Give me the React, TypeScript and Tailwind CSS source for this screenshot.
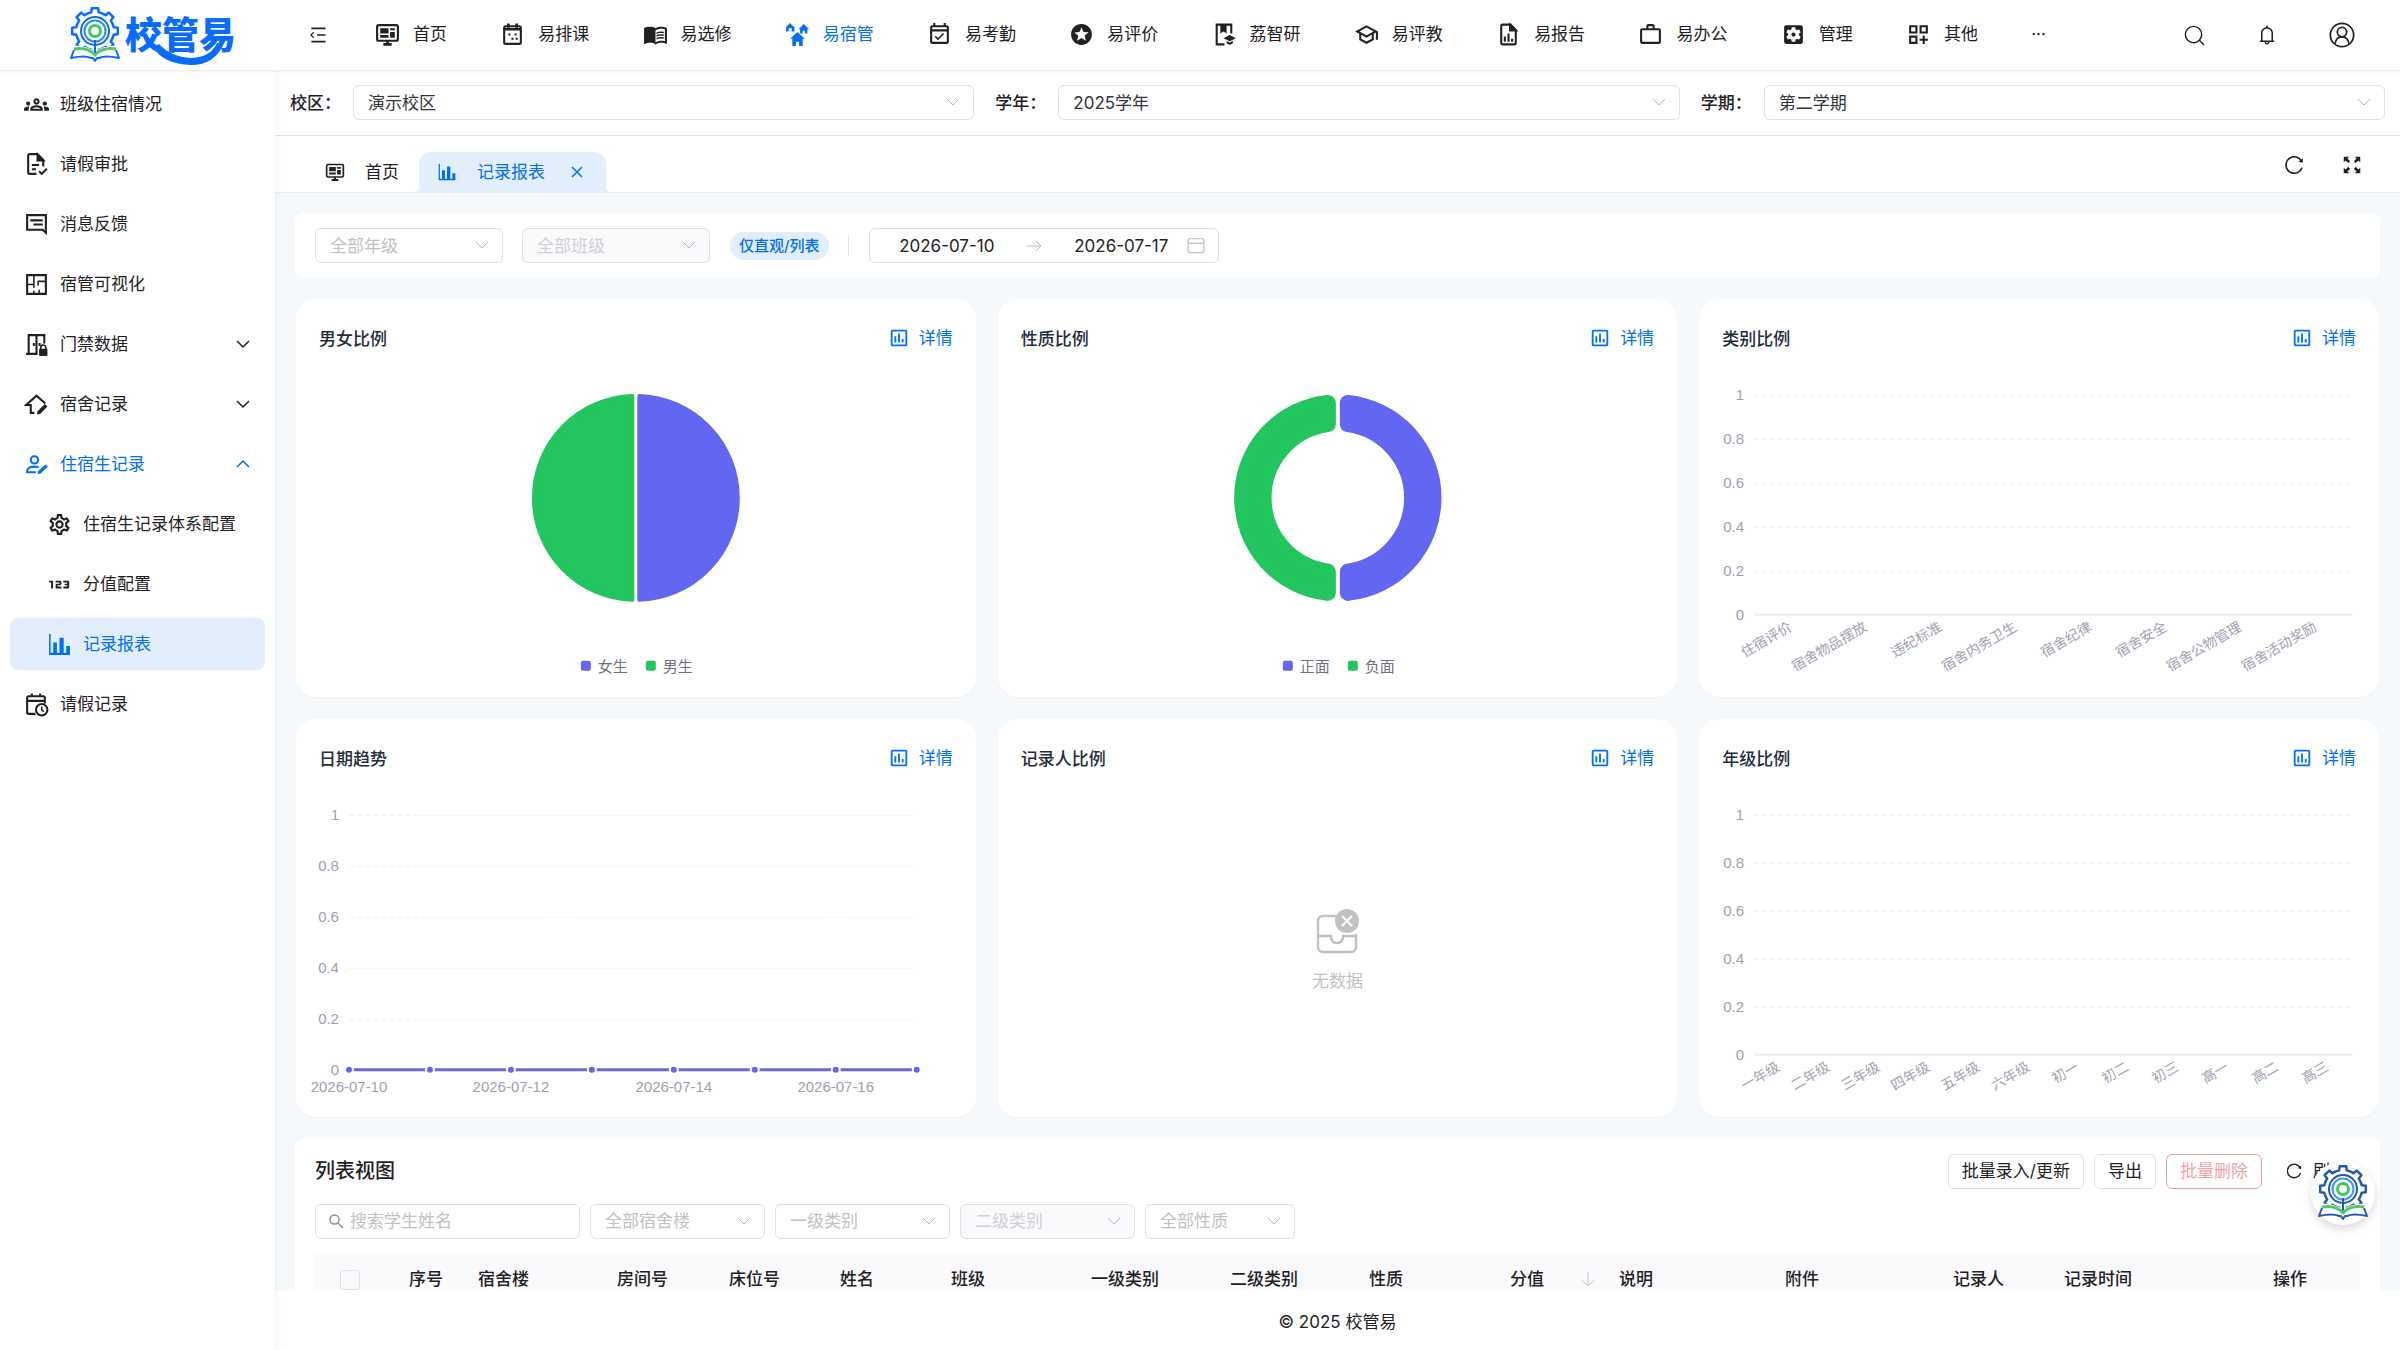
import type { ReactNode } from 'react';
import {
  MdMenuBook,
  MdOutlineEventAvailable,
  MdStars,
  MdOutlineSchool,
  MdWorkOutline,
  MdSettingsApplications,
  MdOutlineDashboardCustomize,
  MdOutlineGroups,
  MdOutlineSettings,
  Md123,
  MdOutlineInsertChart,
} from 'react-icons/md';
import { AiOutlineBell, AiOutlineReload } from 'react-icons/ai';

type IconProps = { className?: string };

function Svg({ className = 'size-6', children }: IconProps & { children: ReactNode }) {
  return (
    <svg
      viewBox="0 0 24 24"
      className={className}
      fill="none"
      stroke="currentColor"
      strokeWidth="2"
      aria-hidden="true"
    >
      {children}
    </svg>
  );
}

const MonitorIcon = (p: IconProps) => (
  <Svg {...p}>
    <rect x="2" y="3" width="20" height="15" rx="1.5" />
    <path d="M5 6h8v5H5zM14.500 6H19v2h-4.500zM14.500 9.500H19V15h-4.500zM5 12.500h8V15H5z" fill="currentColor" stroke="none" />
    <path d="M12 18v3M8 21.500h8" strokeWidth="2.500" />
  </Svg>
);

const CalendarDotsIcon = (p: IconProps) => (
  <Svg {...p}>
    <rect x="4" y="4" width="16" height="17" rx="1.500" />
    <path d="M4 7h16M8 1.500v4M16 1.500v4" strokeWidth="2.500" />
    <path d="M8 11h2v2H8zM14 11h2v2h-2zM11 15h2v2h-2zM15 15h2v2h-2z" fill="currentColor" stroke="none" />
  </Svg>
);

const VillageIcon = (p: IconProps) => (
  <Svg {...p}>
    <path
      d="M4.500 1 9 5v4H6.500V6h-3v3H1V5zM18 2l5 5h-1.500v4H19V8.500h-2V11h-2.500V7H13zM12 9.500l7 6.500h-2v7h-3.500v-4h-3v4H7v-7H5z"
      fill="currentColor"
      stroke="none"
    />
  </Svg>
);

const BookGradIcon = (p: IconProps) => (
  <Svg {...p}>
    <path d="M12 21.500H4.500V2.500h14V11" />
    <path d="M8 2.500h6V11l-3-2-3 2z" fill="currentColor" stroke="none" />
    <path d="m17 12.500 6 3-6 3-6-3zM14 18.200l3 1.500 3-1.500v2.300L17 22l-3-1.500z" fill="currentColor" stroke="none" />
  </Svg>
);

const FileChartIcon = (p: IconProps) => (
  <Svg {...p}>
    <path d="M14 2.500H6.500a1.500 1.500 0 0 0-1.500 1.500v16A1.500 1.500 0 0 0 6.500 21.500h11a1.500 1.500 0 0 0 1.500-1.500V7.500z" />
    <path d="M13.500 3v5H19z" fill="currentColor" />
    <path d="M8.500 14v5M12 11v8M15.500 16v3" />
  </Svg>
);

const FileCheckIcon = (p: IconProps) => (
  <Svg {...p}>
    <path d="M12 21H5.500A1.500 1.500 0 0 1 4 19.500v-16A1.500 1.500 0 0 1 5.500 2H13l5.500 5.500V14" />
    <path d="M13 2.500V8h5.500z" fill="currentColor" />
    <path d="M7.500 12.500h7M7.500 16.500h4M14.500 18.500l2.500 2.500 5-5" />
  </Svg>
);

const MessageIcon = (p: IconProps) => (
  <Svg {...p}>
    <path d="M3 3h18v17l-3-3H3z" />
    <path d="M6 8h12M9 12h9" />
  </Svg>
);

const FloorPlanIcon = (p: IconProps) => (
  <Svg {...p}>
    <path d="M3 3h18v18H3z" />
    <path d="M9.500 3v6M3 12h6.500v3M9.500 9v3M14.500 17v4M9.500 18v3M13 9h8M13.500 9v4" strokeWidth="1.500" />
  </Svg>
);

const DoorLockIcon = (p: IconProps) => (
  <Svg {...p}>
    <path d="M2 21h11M4.500 21V3h15v8M12 3v18" />
    <path d="M9.500 10.500v3M15 10.500v3" />
    <path d="M16 16.500v-1.500a2.500 2.500 0 0 1 5 0v1.500" strokeWidth="1.500" />
    <rect x="14.500" y="16" width="8" height="7" rx="1" fill="currentColor" stroke="none" />
  </Svg>
);

const HouseEditIcon = (p: IconProps) => (
  <Svg {...p}>
    <path d="M10 20H6.500v-7.500H2L12 3.500l8.500 7.500" />
    <path d="m12.500 21.500.5-3 7-7 2.500 2.500-7 7z" fill="currentColor" stroke="none" />
  </Svg>
);

const UserEditIcon = (p: IconProps) => (
  <Svg {...p}>
    <circle cx="10" cy="7.500" r="3.500" />
    <path d="M11.500 19.500H3V18c0-2.500 3.500-4 7-4 1.500 0 3 .3 4 .7" />
    <path d="m13 21 .5-2.500 7-6.500 2.500 2-7 6.700z" fill="currentColor" stroke="none" />
  </Svg>
);

const BarsIcon = (p: IconProps) => (
  <Svg {...p}>
    <path d="M2 2h1.500v18H22v2H2z" fill="currentColor" stroke="none" />
    <path d="M6 10h3.500v11H6zM12 5.500h4V21h-4zM18.500 13.500H22V21h-3.500z" fill="currentColor" stroke="none" />
  </Svg>
);

const CalendarClockIcon = (p: IconProps) => (
  <Svg {...p}>
    <path d="M11 21H4.500A1.500 1.500 0 0 1 3 19.500v-14A1.500 1.500 0 0 1 4.500 4h14A1.500 1.500 0 0 1 20 5.500V11M3 8.500h17M7.500 1.500V5M15.500 1.500V5" />
    <circle cx="17" cy="17" r="5.500" />
    <path d="M17 14v3.200l2 1.800" strokeWidth="1.500" />
  </Svg>
);

const SearchIcon = (p: IconProps) => (
  <Svg {...p}>
    <g strokeWidth="1.500">
      <circle cx="11" cy="11" r="8.500" />
      <path d="m17 17 5 5" />
    </g>
  </Svg>
);

const UserCircleIcon = (p: IconProps) => (
  <Svg {...p}>
    <g strokeWidth="1.500">
      <circle cx="12" cy="12" r="10" />
      <circle cx="12" cy="9.500" r="4" />
      <path d="M6 19.500c.5-3.500 2.500-6 6-6s5.500 2.500 6 6" />
    </g>
  </Svg>
);

const FoldIcon = (p: IconProps) => (
  <Svg {...p}>
    <path d="M4 4h17M11 12h10M4 20h17" />
    <path d="M7 8.500 3.500 12 7 15.500" strokeWidth="1.500" />
  </Svg>
);

const ExpandIcon = (p: IconProps) => (
  <Svg {...p}>
    <path
      d="M3 9V3h6L7 5l3 3-2 2-3-3zM15 3h6v6l-2-2-3 3-2-2 3-3zM3 15l2 2 3-3 2 2-3 3 2 2H3zM16 14l3 3 2-2v6h-6l2-2-3-3z"
      fill="currentColor"
      stroke="none"
    />
  </Svg>
);

const Chevron = ({ className = '' }: IconProps) => (
  <svg viewBox="0 0 16 16" className={className} fill="none" stroke="currentColor" aria-hidden="true">
    <path d="m2 5 6 6 6-6" />
  </svg>
);

function gearPath(cx: number, cy: number, outer: number, inner: number) {
  const points: string[] = [];
  for (let i = 0; i < 8; i++) {
    const steps: [number, number][] = [
      [-0.34, inner],
      [-0.2, inner],
      [-0.14, outer],
      [0.14, outer],
      [0.2, inner],
      [0.34, inner],
    ];
    for (const [offset, r] of steps) {
      const a = (i * Math.PI) / 4 + offset - Math.PI / 2;
      points.push(`${(cx + Math.cos(a) * r).toFixed(1)} ${(cy + Math.sin(a) * r).toFixed(1)}`);
    }
  }
  return `M${points.join('L')}Z`;
}

function Emblem({ blue, ring }: { blue: string; ring: string }) {
  return (
    <g fill="none" strokeLinejoin="round">
      <path d={gearPath(26, 24, 23, 19)} stroke={blue} strokeWidth="2.500" />
      <path d="M3 39q12-1 23 5 11-6 23-5v14H3z" fill="#ffffff" />
      <circle cx="26" cy="24" r="14" stroke={blue} strokeWidth="2" />
      <circle cx="26" cy="24" r="10.500" stroke={ring} strokeWidth="2" />
      <circle cx="26" cy="24" r="5.500" stroke="#3fcb5c" strokeWidth="3" />
      <path d="M26 33v13" stroke={blue} strokeWidth="2" />
      <path d="M5 42q14-2 21 6 7-8 21-6" stroke="#4fc96a" strokeWidth="3" />
      <path d="M5 43 2 51q14-3 20 0h2l2 3 2-3h2q6-3 20 0l-3-8" stroke={blue} strokeWidth="2" />
    </g>
  );
}

function Logo() {
  return (
    <svg viewBox="0 0 172 62" className="h-[62px] w-[172px] overflow-visible" role="img" aria-label="校管易">
      <Emblem blue="#0a6cff" ring="#2f8cf5" />
      <text
        x="56"
        y="42"
        fontSize="37"
        className="fill-[#0a6cff] font-['Noto_Sans_CJK_SC',sans-serif] font-black"
      >
        校管易
      </text>
      <path d="M84 40q10 17 38 18 24 0 33-22h-7q-6 14-26 15-20-1-32-14z" fill="#0a6cff" />
    </svg>
  );
}

const navItems: { label: string; icon: ReactNode; active?: boolean }[] = [
  { label: '首页', icon: <MonitorIcon className="size-[25px]" /> },
  { label: '易排课', icon: <CalendarDotsIcon className="size-[25px]" /> },
  { label: '易选修', icon: <MdMenuBook className="size-[25px]" /> },
  { label: '易宿管', icon: <VillageIcon className="size-[25px]" />, active: true },
  { label: '易考勤', icon: <MdOutlineEventAvailable className="size-[25px]" /> },
  { label: '易评价', icon: <MdStars className="size-[25px]" /> },
  { label: '荔智研', icon: <BookGradIcon className="size-[25px]" /> },
  { label: '易评教', icon: <MdOutlineSchool className="size-[25px]" /> },
  { label: '易报告', icon: <FileChartIcon className="size-[25px]" /> },
  { label: '易办公', icon: <MdWorkOutline className="size-[25px]" /> },
  { label: '管理', icon: <MdSettingsApplications className="size-[25px]" /> },
  { label: '其他', icon: <MdOutlineDashboardCustomize className="size-[25px]" /> },
];

function Header() {
  return (
    <header className="relative z-10 flex h-[70px] shrink-0 items-center bg-white shadow-[0_1px_3px_rgba(0,21,41,0.1)]">
      <a href="#home" className="flex w-[275px] shrink-0 justify-center pl-[34px] pt-[6px]">
        <Logo />
      </a>
      <button type="button" aria-label="收起菜单" className="ml-[33px] mr-[47px]">
        <FoldIcon className="size-5" />
      </button>
      <nav className="flex flex-1 items-center justify-between pb-[2px]">
        {navItems.map((item) => (
          <a
            key={item.label}
            href="#nav"
            className={`flex items-center gap-[13px] whitespace-nowrap ${item.active ? 'text-[#0070f5]' : ''}`}
          >
            {item.icon}
            {item.label}
          </a>
        ))}
        <button type="button" aria-label="更多">···</button>
      </nav>
      <div className="ml-[137px] mr-11 flex items-center gap-[50px]">
        <button type="button" aria-label="搜索"><SearchIcon className="size-[23px]" /></button>
        <button type="button" aria-label="通知"><AiOutlineBell className="size-[22px]" /></button>
        <button type="button" aria-label="用户"><UserCircleIcon className="size-7" /></button>
      </div>
    </header>
  );
}

type MenuItem = {
  label: string;
  icon: ReactNode;
  child?: boolean;
  active?: boolean;
  current?: boolean;
  arrow?: 'up' | 'down';
};

const menu: MenuItem[] = [
  { label: '班级住宿情况', icon: <MdOutlineGroups className="size-[25px]" /> },
  { label: '请假审批', icon: <FileCheckIcon className="size-[25px]" /> },
  { label: '消息反馈', icon: <MessageIcon className="size-[25px]" /> },
  { label: '宿管可视化', icon: <FloorPlanIcon className="size-[25px]" /> },
  { label: '门禁数据', icon: <DoorLockIcon className="size-[25px]" />, arrow: 'down' },
  { label: '宿舍记录', icon: <HouseEditIcon className="size-[25px]" />, arrow: 'down' },
  { label: '住宿生记录', icon: <UserEditIcon className="size-[25px]" />, arrow: 'up', active: true },
  { label: '住宿生记录体系配置', icon: <MdOutlineSettings className="size-[25px]" />, child: true },
  { label: '分值配置', icon: <Md123 className="-mx-[3px] size-[31px]" />, child: true },
  { label: '记录报表', icon: <BarsIcon className="size-[25px]" />, child: true, active: true, current: true },
  { label: '请假记录', icon: <CalendarClockIcon className="size-[25px]" /> },
];

function Sidebar() {
  return (
    <aside className="relative z-[5] w-[275px] shrink-0 bg-white px-[10px] pt-2 shadow-[2px_0_8px_rgba(29,35,41,0.05)]">
      <nav className="flex flex-col gap-2">
        {menu.map((item) => (
          <a
            key={item.label}
            href="#menu"
            className={`flex h-[52px] items-center gap-[11px] rounded-lg pr-[14px] ${item.child ? 'pl-[37px]' : 'pl-[14px]'} ${
              item.active ? 'text-[#0070f5]' : ''
            } ${item.current ? 'bg-[#e3eefc]' : ''}`}
          >
            {item.icon}
            <span className="flex-1 whitespace-nowrap">{item.label}</span>
            {item.arrow && (
              <svg viewBox="0 0 16 16" className="size-4" fill="none" stroke="currentColor" strokeWidth="1.5" aria-hidden="true">
                <path d={item.arrow === 'down' ? 'm2 5 6 6 6-6' : 'm2 11 6-6 6 6'} />
              </svg>
            )}
          </a>
        ))}
      </nav>
    </aside>
  );
}

function Select({ label, value, width, disabled, tone = 'text-[#c2c2c2]' }: {
  label: string;
  value: string;
  width: string;
  disabled?: boolean;
  tone?: string;
}) {
  return (
    <div className={`relative ${width}`}>
      <select
        aria-label={label}
        disabled={disabled}
        defaultValue={value}
        className={`h-[35px] w-full appearance-none rounded-md border border-[#e0e0e6] px-[14px] leading-8 opacity-100 ${
          disabled ? 'bg-[#fafafc] text-[#d0d0d4]' : `bg-white ${tone}`
        }`}
      >
        <option>{value}</option>
      </select>
      <Chevron className="pointer-events-none absolute right-[13px] top-[9px] size-4 text-[#b8b8be]" />
    </div>
  );
}

function ScopeBar() {
  const fields = [
    ['校区', '演示校区'],
    ['学年', '2025学年'],
    ['学期', '第二学期'],
  ];
  return (
    <div className="flex h-[66px] shrink-0 items-center gap-[21px] border-b border-[#e4e5e8] bg-white pl-[15px] pr-[15px]">
      {fields.map(([label, value]) => (
        <div key={label} className="flex flex-1 items-center">
          <span className="w-[63px] shrink-0 whitespace-nowrap font-medium">{label}：</span>
          <Select label={label} value={value} width="flex-1" tone="text-[#333639]" />
        </div>
      ))}
    </div>
  );
}

function TabBar() {
  return (
    <div className="flex h-[57px] shrink-0 items-end border-b border-[#e9eef3] bg-white pl-[50px] pr-[37px] shadow-[0_1px_2px_rgba(0,21,41,0.08)]">
      <a href="#home" className="flex h-10 items-center gap-5 pr-5">
        <MonitorIcon className="size-5" />
        首页
      </a>
      <div className="relative flex h-10 items-center rounded-t-xl bg-[#e3eefc] pl-[18px] pr-[22px] text-[#0070f5]">
        <svg viewBox="0 0 6 6" className="absolute -left-1.5 bottom-0 size-1.5 fill-[#e3eefc]" aria-hidden="true">
          <path d="M6 0v6H0q6 0 6-6" />
        </svg>
        <svg viewBox="0 0 6 6" className="absolute -right-1.5 bottom-0 size-1.5 fill-[#e3eefc]" aria-hidden="true">
          <path d="M0 0v6h6Q0 6 0 0" />
        </svg>
        <BarsIcon className="size-5" />
        <a href="#report" className="ml-5">记录报表</a>
        <button type="button" aria-label="关闭" className="ml-[25px]">
          <svg viewBox="0 0 14 14" className="size-[14px]" fill="none" stroke="currentColor" strokeWidth="1.500" aria-hidden="true">
            <path d="m2 2 10 10M12 2 2 12" />
          </svg>
        </button>
      </div>
      <div className="mb-4 ml-auto flex items-center gap-9">
        <button type="button" aria-label="刷新页面"><AiOutlineReload className="size-[22px]" /></button>
        <button type="button" aria-label="全屏"><ExpandIcon className="size-[22px]" /></button>
      </div>
    </div>
  );
}

function FilterCard() {
  return (
    <section className="flex h-[65px] items-center rounded-lg bg-white px-5">
      <Select label="年级" value="全部年级" width="w-[188px]" />
      <div className="w-[19px]" />
      <Select label="班级" value="全部班级" width="w-[188px]" disabled />
      <span className="ml-5 flex h-7 items-center whitespace-nowrap rounded-full bg-[#e3eefc] px-[9px] text-[15px] font-medium text-[#0070f5]">
        仅直观/列表
      </span>
      <span className="ml-[19px] h-5 w-px bg-[#e4e4e8]" />
      <div className="ml-5 flex h-[35px] w-[350px] items-center rounded-md border border-[#e0e0e6] pl-1 pr-[13px]">
        <input aria-label="开始日期" defaultValue="2026-07-10" className="min-w-0 flex-1 text-center" />
        <svg viewBox="0 0 16 16" className="mx-[6px] size-4 shrink-0 text-[#b8b8be]" fill="none" stroke="currentColor" aria-hidden="true">
          <path d="M1 8h14M10 3l5 5-5 5" />
        </svg>
        <input aria-label="结束日期" defaultValue="2026-07-17" className="min-w-0 flex-1 text-center" />
        <svg viewBox="0 0 16 16" className="-ml-2 size-[18px] shrink-0 text-[#b8b8be]" fill="none" stroke="currentColor" aria-hidden="true">
          <rect x="1" y="1.500" width="14" height="12.500" rx="1.500" />
          <path d="M1 5.500h14" />
        </svg>
      </div>
    </section>
  );
}

function ChartCard({ title, children }: { title: string; children: ReactNode }) {
  return (
    <section className="flex flex-col rounded-[20px] bg-white shadow-[0_1px_2px_rgba(0,0,0,0.03)]">
      <div className="flex h-[60px] items-center justify-between px-[23px] pt-5">
        <h2 className="font-medium text-[#1f2d3d]">{title}</h2>
        <button type="button" className="flex items-center gap-[9px] pb-[2px] text-[#0070f5]">
          <MdOutlineInsertChart className="size-[22px]" />
          详情
        </button>
      </div>
      {children}
    </section>
  );
}

const chartText = "font-['Liberation_Sans','Noto_Sans_CJK_SC',sans-serif] text-[15px]";

function PieChart({ donut, names }: { donut?: boolean; names: [string, string] }) {
  const half = donut
    ? 'M10-95A95.500 95.500 0 0 1 10 95V73.800A74.500 74.500 0 0 0 10-73.800Z'
    : 'M3.500-101.940A102 102 0 0 1 3.500 101.940Z';
  const width = donut ? 16 : 4;
  return (
    <svg viewBox="0 0 680 338" className={`w-full ${chartText}`} role="img" aria-label={names.join(' / ')}>
      <g transform="translate(340 139)" strokeLinejoin="round" strokeWidth={width}>
        <path d={half} fill="#6366f1" stroke="#6366f1" />
        <path d={half} fill="#22c55e" stroke="#22c55e" transform="scale(-1 1)" />
      </g>
      <g fill="#6b7280">
        <rect x="285" y="302" width="10" height="10" rx="2" fill="#6366f1" />
        <text x="302" y="313">{names[0]}</text>
        <rect x="350" y="302" width="10" height="10" rx="2" fill="#22c55e" />
        <text x="367" y="313">{names[1]}</text>
      </g>
    </svg>
  );
}

const ticks = ['1', '0.8', '0.6', '0.4', '0.2', '0'];

function YAxis({ bottom, left, right }: { bottom: number; left: number; right: number }) {
  return (
    <>
      {ticks.map((tick, i) => {
        const y = Math.round(36 + ((bottom - 36) * i) / 5);
        return (
          <g key={tick}>
            <text x={left - 10} y={y + 5} textAnchor="end" fill="#9ca3af">{tick}</text>
            {i < 5 && <path d={`M${left} ${y}.5H${right}`} stroke="#f1f2f4" strokeDasharray="5 3" />}
          </g>
        );
      })}
    </>
  );
}

function CategoryChart({ names, bottom }: { names: string[]; bottom: number }) {
  const step = 599 / names.length;
  return (
    <svg viewBox="0 0 680 338" className={`w-full ${chartText}`} role="img" aria-label={names.join(' ')}>
      <YAxis bottom={bottom} left={55} right={654} />
      <path d={`M55 ${bottom}H654`} stroke="#e8eaed" strokeWidth="2" />
      {names.map((name, i) => (
        <text
          key={name}
          textAnchor="end"
          fill="#9ca3af"
          className="text-[14px]"
          transform={`translate(${Math.round(55 + step * (i + 0.5)) + 2} ${bottom + 15}) rotate(-30)`}
        >
          {name}
        </text>
      ))}
    </svg>
  );
}

function TrendChart() {
  const xs = Array.from({ length: 8 }, (_, i) => Math.round(53 + (568 * i) / 7));
  return (
    <svg viewBox="0 0 680 338" className={`w-full ${chartText}`} role="img" aria-label="日期趋势">
      <YAxis bottom={291} left={53} right={621} />
      <path d="M53 291H621" stroke="#6d65dd" strokeWidth="3" />
      {xs.map((x, i) => (
        <g key={x}>
          <circle cx={x} cy="291" r="5" fill="#ffffff" />
          <circle cx={x} cy="291" r="3" fill="#6366f1" />
          {i % 2 === 0 && (
            <text x={x} y="313" textAnchor="middle" fill="#9ca3af">{`2026-07-${10 + i}`}</text>
          )}
        </g>
      ))}
    </svg>
  );
}

function EmptyState() {
  return (
    <div className="flex flex-1 flex-col items-center justify-center gap-3 pt-1 text-[#c2c2c2]">
      <svg viewBox="0 0 50 50" className="size-[50px]" fill="none" aria-hidden="true">
        <path
          d="M24 9H11a5 5 0 0 0-5 5v26a5 5 0 0 0 5 5h28a5 5 0 0 0 5-5V27M6 29h13q0 7 6 7t6-7h13"
          stroke="currentColor"
          strokeWidth="2.500"
        />
        <circle cx="35" cy="14" r="12" fill="currentColor" />
        <path d="m30 9 10 10M40 9 30 19" stroke="#ffffff" strokeWidth="2" />
      </svg>
      无数据
    </div>
  );
}

const columns: [string, string][] = [
  ['序号', 'w-[82px]'],
  ['宿舍楼', 'w-[139px]'],
  ['房间号', 'w-[112px]'],
  ['床位号', 'w-[111px]'],
  ['姓名', 'w-[111px]'],
  ['班级', 'w-[140px]'],
  ['一级类别', 'w-[139px]'],
  ['二级类别', 'w-[139px]'],
  ['性质', 'w-[141px]'],
  ['分值', 'w-[109px]'],
  ['说明', 'w-[166px]'],
  ['附件', 'w-[168px]'],
  ['记录人', 'w-[111px]'],
  ['记录时间', 'w-[167px]'],
  ['操作', 'w-[140px]'],
];

function ListCard() {
  return (
    <section className="rounded-lg bg-white px-5 pt-4">
      <div className="flex items-center justify-between">
        <h2 className="text-xl font-medium">列表视图</h2>
        <div className="flex h-[35px] items-stretch gap-[10px]">
          <button type="button" className="rounded-md border border-[#e0e0e6] px-[13px]">批量录入/更新</button>
          <button type="button" className="rounded-md border border-[#e0e0e6] px-[13px]">导出</button>
          <button type="button" disabled className="rounded-md border border-[#eb9c9c] px-[13px] text-[#f0a3a3]">批量删除</button>
          <button type="button" className="flex items-center gap-[10px] pl-[13px] pr-[13px]">
            <AiOutlineReload className="size-[18px]" />
            刷新
          </button>
        </div>
      </div>
      <div className="mt-[15px] flex gap-[10px]">
        <label className="flex h-[35px] w-[265px] items-center gap-[6px] rounded-md border border-[#e0e0e6] px-3">
          <svg viewBox="0 0 16 16" className="size-4 text-[#8a8f96]" fill="none" stroke="currentColor" strokeWidth="1.500" aria-hidden="true">
            <circle cx="6.500" cy="6.500" r="4.500" />
            <path d="m10 10 5 5" />
          </svg>
          <input aria-label="搜索学生姓名" placeholder="搜索学生姓名" className="min-w-0 flex-1 placeholder:text-[#c2c2c2]" />
        </label>
        <Select label="宿舍楼" value="全部宿舍楼" width="w-[175px]" />
        <Select label="一级类别" value="一级类别" width="w-[175px]" />
        <Select label="二级类别" value="二级类别" width="w-[175px]" disabled />
        <Select label="性质" value="全部性质" width="w-[150px]" />
      </div>
      <table className="mt-[15px] w-full table-fixed bg-[#fafafc]">
        <thead>
          <tr className="h-[50px] text-left">
            <th className="w-[70px] text-center">
              <input
                type="checkbox"
                aria-label="全选"
                className="size-5 appearance-none rounded-[3px] border border-[#e0e0e6] align-middle"
              />
            </th>
            {columns.map(([name, width]) => (
              <th
                key={name}
                className={`${width} whitespace-nowrap font-medium ${
                  name === '序号' || name === '操作' ? 'text-center' : 'pl-[11px]'
                }`}
              >
                {name === '分值' ? (
                  <span className="flex items-center justify-between pr-3">
                    分值
                    <svg viewBox="0 0 16 16" className="size-4 text-[#c2c2c8]" fill="none" stroke="currentColor" aria-hidden="true">
                      <path d="M8 1v14M2 9.500 8 15l6-5.500" />
                    </svg>
                  </span>
                ) : (
                  name
                )}
              </th>
            ))}
          </tr>
        </thead>
      </table>
    </section>
  );
}

export default function App() {
  return (
    <div className="flex h-screen flex-col overflow-hidden bg-white font-['Inter','Noto_Sans_CJK_SC',sans-serif] text-[17px] leading-6 text-[#1f2225]">
      <Header />
      <div className="flex min-h-0 flex-1">
        <Sidebar />
        <div className="flex min-w-0 flex-1 flex-col">
          <ScopeBar />
          <TabBar />
          <main className="min-h-0 flex-1 overflow-hidden bg-[#f6f9fc] px-5 pt-5">
            <FilterCard />
            <div className="mx-px my-[21px] grid grid-cols-3 gap-[22px]">
              <ChartCard title="男女比例"><PieChart names={['女生', '男生']} /></ChartCard>
              <ChartCard title="性质比例"><PieChart donut names={['正面', '负面']} /></ChartCard>
              <ChartCard title="类别比例">
                <CategoryChart
                  bottom={256}
                  names={['住宿评价', '宿舍物品摆放', '违纪标准', '宿舍内务卫生', '宿舍纪律', '宿舍安全', '宿舍公物管理', '宿舍活动奖励']}
                />
              </ChartCard>
              <ChartCard title="日期趋势"><TrendChart /></ChartCard>
              <ChartCard title="记录人比例"><EmptyState /></ChartCard>
              <ChartCard title="年级比例">
                <CategoryChart
                  bottom={276}
                  names={['一年级', '二年级', '三年级', '四年级', '五年级', '六年级', '初一', '初二', '初三', '高一', '高二', '高三']}
                />
              </ChartCard>
            </div>
            <ListCard />
          </main>
          <footer className="flex h-[60px] shrink-0 items-center justify-center bg-white pt-1">© 2025 校管易</footer>
        </div>
      </div>
      <button
        type="button"
        aria-label="助手"
        className="fixed bottom-[125px] right-[25px] z-20 flex size-16 items-center justify-center rounded-full bg-white shadow-[0_4px_10px_rgba(0,0,0,0.15)]"
      >
        <svg viewBox="0 0 52 56" className="h-[56px] w-[52px]" aria-hidden="true">
          <Emblem blue="#2459b0" ring="#3f9be8" />
        </svg>
      </button>
    </div>
  );
}
